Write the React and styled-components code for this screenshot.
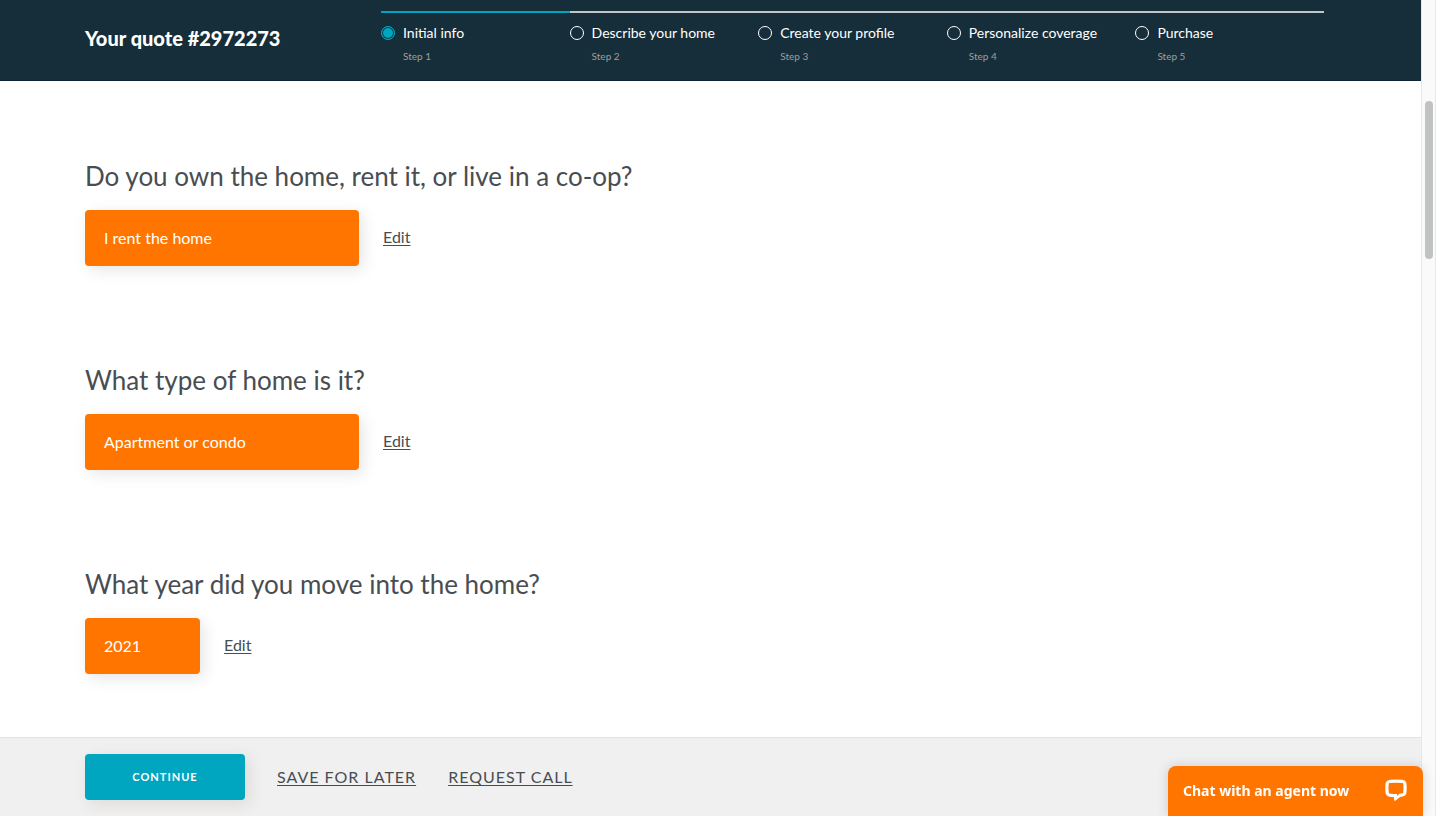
import React from "react";
import styled, { createGlobalStyle } from "styled-components";

const GlobalStyle = createGlobalStyle`
  *, *::before, *::after { box-sizing: border-box; }
  body {
    margin: 0;
    background: #fff;
    color: #484d52;
    font-family: Lato, "Open Sans", sans-serif;
  }
  button { font-family: inherit; border: 0; cursor: pointer; }
`;

const Shell = styled.div`
  display: grid;
  grid-template-columns: minmax(0, 1fr) 15px;
  height: 100vh;
  overflow: hidden;
`;

const Page = styled.div`
  display: flex;
  flex-direction: column;
  min-height: 0;
`;

const Header = styled.header`
  display: flex;
  flex: none;
  height: 81px;
  padding: 11px 97px 0 85px;
  background: #162e3a;
  border-bottom: 1px solid #0e2539;
  color: #fff;
`;

const QuoteTitle = styled.h1`
  flex: 0 0 296px;
  margin: 0;
  padding-top: 15px;
  font-size: 20px;
  line-height: 24px;
  font-weight: 900;
`;

const Steps = styled.ol`
  display: grid;
  flex: 1;
  grid-template-columns: repeat(5, 1fr);
  margin: 0;
  padding: 0;
  list-style: none;
`;

const Step = styled.li`
  border-top: 2px solid ${(p) => (p.$active ? "#00a5c0" : "#c0c4c6")};
`;

const StepLabel = styled.label`
  display: grid;
  grid-template-columns: 14px 1fr;
  column-gap: 8px;
  align-items: center;
  padding-top: 10px;
  font-size: 14px;
  line-height: 20px;
  white-space: nowrap;
`;

const StepDot = styled.input`
  appearance: none;
  width: 14px;
  height: 14px;
  margin: 0;
  border: 1px solid #fff;
  border-radius: 50%;

  &:checked {
    border-color: #00a5c0;
    background: #00a5c0;
    box-shadow: inset 0 0 0 1px #162e3a;
  }
`;

const StepNumber = styled.span`
  grid-column: 2;
  padding-top: 4px;
  color: #a09e9c;
  font-size: 10px;
  line-height: 18px;
`;

const Questions = styled.main`
  display: flex;
  flex: 1;
  flex-direction: column;
  gap: 98px;
  min-height: 0;
  padding: 79px 85px 0;
  overflow: hidden;
`;

const QuestionTitle = styled.h2`
  margin: 0 0 18px;
  font-size: 26px;
  line-height: 32px;
  font-weight: 400;
`;

const AnswerRow = styled.div`
  display: flex;
  align-items: center;
  gap: 24px;
`;

const Answer = styled.button`
  width: ${(p) => (p.$short ? "115px" : "274px")};
  height: 56px;
  padding: 0 19px 2px;
  border-radius: 4px;
  background: #ff7500;
  box-shadow: 4px 4px 16px rgba(0, 0, 0, 0.1);
  color: #fff;
  font-size: 16px;
  text-align: left;
`;

const TextLink = styled.a`
  color: #484d52;
  font-size: 16px;
  line-height: 20px;
  text-decoration: underline;
  text-underline-offset: 2px;
`;

const EditLink = styled(TextLink)`
  padding-bottom: 2px;
`;

const Footer = styled.footer`
  display: flex;
  flex: none;
  align-items: center;
  gap: 32px;
  padding: 16px 85px;
  border-top: 1px solid #e4e4e4;
  background: #f0f0f0;
`;

const ContinueButton = styled.button`
  width: 160px;
  height: 46px;
  padding: 0 0 2px;
  border-radius: 4px;
  background: #00a5c0;
  box-shadow: 4px 4px 16px rgba(60, 40, 20, 0.1);
  color: #fff;
  font-size: 11px;
  font-weight: 700;
  letter-spacing: 1px;
  text-transform: uppercase;
`;

const FooterLink = styled(TextLink)`
  letter-spacing: 1px;
  text-transform: uppercase;
`;

const ScrollTrack = styled.div`
  padding: 101px 2px 0 3px;
  border: solid #e8e8e8;
  border-width: 0 1px;
  background: #fafafa;
`;

const ScrollThumb = styled.div`
  width: 8px;
  height: 158px;
  border-radius: 4px;
  background: #c1c2c2;
`;

const ChatButton = styled.button`
  position: fixed;
  right: 13px;
  bottom: 0;
  display: flex;
  align-items: center;
  justify-content: space-between;
  width: 255px;
  height: 50px;
  padding: 0 15px 2px;
  border-radius: 8px 8px 0 0;
  background: #ff7500;
  box-shadow: 0 0 12px rgba(0, 0, 0, 0.16);
  color: #fff;
  font-family: "Noto Sans", sans-serif;
  font-size: 14px;
  font-weight: 700;
`;

const steps = [
  "Initial info",
  "Describe your home",
  "Create your profile",
  "Personalize coverage",
  "Purchase",
];

const questions = [
  { title: "Do you own the home, rent it, or live in a co-op?", answer: "I rent the home" },
  { title: "What type of home is it?", answer: "Apartment or condo" },
  { title: "What year did you move into the home?", answer: "2021", short: true },
];

function ChatIcon() {
  return (
    <svg width="24" height="22" viewBox="0 0 24 22" aria-hidden="true">
      <path
        fill="#fff"
        fillRule="evenodd"
        d="M6.500 0.800Q12 0 18.500 0.800Q22 1.300 22.500 4.800Q23 9 22.500 13.500Q22 17 18.500 17.600L16 18L11 22L10 21V18.200Q8 18.100 5.500 17.700Q2 17 1.500 13.500Q1 9 1.500 4.800Q2 1.300 6.500 0.800ZM5.500 4Q12 3.300 18.500 4Q19.200 4.100 19.300 4.800Q19.700 9 19.300 13.300Q19.200 14.100 18.500 14.300L15.500 14.800L13 17V15.100Q9 15 5.500 14.400Q4.800 14.200 4.700 13.500Q4.300 9 4.700 4.900Q4.800 4.100 5.500 4Z"
      />
    </svg>
  );
}

export default function App() {
  return (
    <>
      <GlobalStyle />
      <Shell>
        <Page>
          <Header>
            <QuoteTitle>Your quote #2972273</QuoteTitle>
            <Steps>
              {steps.map((name, i) => (
                <Step key={name} $active={i === 0}>
                  <StepLabel>
                    <StepDot type="radio" name="step" defaultChecked={i === 0} />
                    {name}
                    <StepNumber>Step {i + 1}</StepNumber>
                  </StepLabel>
                </Step>
              ))}
            </Steps>
          </Header>
          <Questions>
            {questions.map((q) => (
              <section key={q.title}>
                <QuestionTitle>{q.title}</QuestionTitle>
                <AnswerRow>
                  <Answer type="button" $short={q.short}>{q.answer}</Answer>
                  <EditLink href="#edit">Edit</EditLink>
                </AnswerRow>
              </section>
            ))}
          </Questions>
          <Footer>
            <ContinueButton type="button">Continue</ContinueButton>
            <FooterLink href="#save">Save for later</FooterLink>
            <FooterLink href="#call">Request call</FooterLink>
          </Footer>
        </Page>
        <ScrollTrack aria-hidden="true">
          <ScrollThumb />
        </ScrollTrack>
      </Shell>
      <ChatButton type="button">
        Chat with an agent now
        <ChatIcon />
      </ChatButton>
    </>
  );
}
